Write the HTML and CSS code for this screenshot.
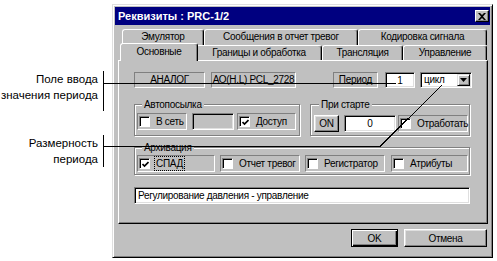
FILE: index.html
```html
<!DOCTYPE html>
<html lang="ru">
<head>
    <meta charset="UTF-8">
    <title>Реквизиты : PRC-1/2</title>
    <link rel="stylesheet" href="styles.css">
</head>
<body>
<div class="page">
    <div class="notes">
        <div class="note note-period">Поле ввода<br>значения периода</div>
        <div class="note note-unit">Размерность<br>периода</div>
    </div>

    <div class="dialog">
        <div class="titlebar">
            <span class="title">Реквизиты : PRC-1/2</span>
            <span class="close">
                <svg width="8" height="7" viewBox="0 0 8 7"><path d="M0 0h2l2 2 2-2h2L5 3.5 8 7H6L4 5 2 7H0l3-3.5z" fill="#000"/></svg>
            </span>
        </div>

        <div class="tabs">
            <div class="tab-row back">
                <div class="tab t-emu">Эмулятор</div>
                <div class="tab t-msg">Сообщения в отчет тревог</div>
                <div class="tab t-code">Кодировка сигнала</div>
            </div>
            <div class="tab-row front">
                <div class="tab t-main active">Основные</div>
                <div class="tab t-limits">Границы и обработка</div>
                <div class="tab t-trans">Трансляция</div>
                <div class="tab t-ctrl">Управление</div>
            </div>
        </div>

        <div class="panel">
            <div class="row-top">
                <div class="static s-type">АНАЛОГ</div>
                <div class="static s-addr">АО(Н.L) PCL_2728</div>
                <div class="static s-period">Период</div>
                <div class="edit e-period">1</div>
                <div class="edit combo">
                    <span class="combo-text">цикл</span>
                    <span class="combo-btn"><svg width="7" height="4" viewBox="0 0 7 4"><path d="M0 0h7L3.5 4z" fill="#000"/></svg></span>
                </div>
            </div>

            <div class="row-groups">
                <div class="group g-auto">
                    <div class="group-label">Автопосылка</div>
                    <div class="group-row">
                        <div class="check-cell c-net"><span class="check"></span>В сеть</div>
                        <div class="edit e-disabled"></div>
                        <div class="check-cell c-access"><span class="check on"><svg width="7" height="7" viewBox="0 0 7 7"><path d="M0.5 3l2 2 4-4" stroke="#000" stroke-width="1.7" fill="none"/></svg></span>Доступ</div>
                    </div>
                </div>
                <div class="group g-start">
                    <div class="group-label">При старте</div>
                    <div class="group-row start-row">
                        <div class="btn b-on">ON</div>
                        <div class="edit e-start">0</div>
                        <div class="check-cell c-run"><span class="check"></span>Отработать</div>
                    </div>
                </div>
            </div>

            <div class="group g-archive">
                <div class="group-label">Архивация</div>
                <div class="group-row">
                    <div class="check-cell c-fall"><span class="check on"><svg width="7" height="7" viewBox="0 0 7 7"><path d="M0.5 3l2 2 4-4" stroke="#000" stroke-width="1.7" fill="none"/></svg></span><span class="focus">СПАД</span></div>
                    <div class="check-cell c-report"><span class="check"></span>Отчет тревог</div>
                    <div class="check-cell c-rec"><span class="check"></span>Регистратор</div>
                    <div class="check-cell c-attr"><span class="check"></span>Атрибуты</div>
                </div>
            </div>

            <div class="edit e-desc">Регулирование давления - управление</div>
        </div>

        <div class="buttons">
            <div class="btn default b-ok">OK</div>
            <div class="btn b-cancel">Отмена</div>
        </div>
    </div>

    <!-- callout lines drawn over the dialog -->
    <svg class="callouts" width="497" height="261" viewBox="0 0 497 261">
        <path d="M103 83.5H396" stroke="#000" stroke-width="1" fill="none" shape-rendering="crispEdges"/>
        <path d="M103 146.5H380L442 85" stroke="#000" stroke-width="1" fill="none" shape-rendering="crispEdges"/>
    </svg>
</div>
</body>
</html>
```

FILE: styles.css
```css
body {
    margin: 0;
    background: #fff;
    font-family: 'Liberation Sans', Arial, sans-serif;
    font-size: 10px;
    letter-spacing: -0.3px;
    color: #000;
}
.page {
    position: relative;
    width: 497px;
    height: 261px;
    overflow: hidden;
    display: flex;
}
.notes {
    width: 104px;
    flex: none;
    font-size: 11.5px;
    letter-spacing: 0;
    line-height: 16px;
}
.note {
    border-right: 1px solid #000;
    padding-right: 5px;
    text-align: right;
    white-space: nowrap;
}
.note-period {
    margin-top: 71px;
    height: 40px;
}
.note-unit {
    margin-top: 24px;
    height: 32px;
}
.callouts {
    position: absolute;
    left: 0;
    top: 0;
    pointer-events: none;
}

/* window frame */
.dialog {
    width: 381px;
    height: 254px;
    margin: 4px 0 0 8px;
    box-sizing: border-box;
    background: #c0c0c0;
    border: 1px solid;
    border-color: #dfdfdf #000 #000 #dfdfdf;
    box-shadow: inset 1px 1px #fff, inset -1px -1px #808080;
    padding: 2px;
}
.titlebar {
    height: 18px;
    background: #000080;
    color: #fff;
    display: flex;
    align-items: center;
    justify-content: space-between;
    padding: 0 1px 0 3px;
    font-size: 11px;
    letter-spacing: 0;
    font-weight: bold;
}
.close {
    width: 14px;
    height: 12px;
    box-sizing: border-box;
    background: #c0c0c0;
    border: 1px solid;
    border-color: #fff #000 #000 #fff;
    box-shadow: inset -1px -1px #808080;
    display: flex;
    align-items: center;
    justify-content: center;
}

/* tabs */
.tabs {
    margin-top: 4px;
}
.tab-row {
    display: flex;
    padding-left: 7px;
}
.tab-row.back {
    height: 16px;
}
.tab-row.front {
    height: 15px;
}
.tab {
    flex: none;
    box-sizing: border-box;
    border: 1px solid;
    border-bottom: none;
    border-color: #fff #000 transparent #fff;
    border-radius: 3px 3px 0 0;
    box-shadow: inset -1px 0 #808080;
    text-align: center;
    line-height: 14px;
    white-space: nowrap;
}
.t-emu { width: 82px; }
.t-msg { width: 154px; }
.t-code { width: 129px; }
.t-main { width: 74px; }
.t-limits { width: 126px; }
.t-trans { width: 81px; }
.t-ctrl { width: 84px; }
.tab.active {
    position: relative;
    z-index: 1;
    width: 78px;
    height: 18px;
    margin: -2px -2px 0 -2px;
    background: #c0c0c0;
    line-height: 16px;
}

/* page of the tab control */
.panel {
    height: 164px;
    margin: 0 2px 0 3px;
    box-sizing: border-box;
    border: 1px solid;
    border-color: #fff #000 #000 #fff;
    box-shadow: inset -1px -1px #808080;
    padding: 11px 17px 0 15px;
}
.row-top {
    display: flex;
    height: 16px;
}
.row-top > div {
    flex: none;
}
.static {
    box-sizing: border-box;
    border: 1px solid;
    border-color: #808080 #fff #fff #808080;
    text-align: center;
    line-height: 14px;
    white-space: nowrap;
}
.s-type { width: 71px; margin-right: 6px; }
.s-addr { width: 85px; margin-right: 37px; }
.s-period { width: 45px; margin-right: 7px; }

.edit {
    box-sizing: border-box;
    background: #fff;
    border: 1px solid;
    border-color: #808080 #fff #fff #808080;
    box-shadow: inset 1px 1px #000, inset -1px -1px #dfdfdf;
    line-height: 15px;
    white-space: nowrap;
}
.e-period {
    width: 30px;
    margin-right: 5px;
    text-align: center;
}
.combo {
    width: 52px;
    display: flex;
    align-items: center;
    justify-content: space-between;
    padding: 2px 1px 2px 3px;
}
.combo-text {
    line-height: 12px;
}
.combo-btn {
    width: 13px;
    height: 12px;
    box-sizing: border-box;
    background: #c0c0c0;
    border: 1px solid;
    border-color: #dfdfdf #000 #000 #dfdfdf;
    box-shadow: inset 1px 1px #fff, inset -1px -1px #808080;
    display: flex;
    align-items: center;
    justify-content: center;
}

/* group boxes */
.row-groups {
    display: flex;
    gap: 10px;
    margin-top: 16px;
}
.group {
    box-sizing: border-box;
    border: 1px solid #808080;
    box-shadow: inset 1px 1px #fff, 1px 1px #fff;
    padding: 0 1px 3px 2px;
}
.group-label {
    width: max-content;
    margin: -7px 0 0 5px;
    padding: 0 2px;
    background: #c0c0c0;
    line-height: 13px;
}
.group-row {
    display: flex;
    height: 17px;
    margin-top: 2px;
}
.group-row > div {
    flex: none;
}
.g-auto { width: 166px; height: 32px; }
.g-start { width: 160px; height: 32px; padding-left: 3px; }
.start-row { margin-top: 4px; }
.g-archive {
    margin-top: 11px;
    height: 28px;
}
.g-archive .group-row {
    margin-top: 1px;
}

.check-cell {
    box-sizing: border-box;
    border: 1px solid;
    border-color: #808080 #fff #fff #808080;
    display: flex;
    align-items: center;
    padding-left: 1px;
    gap: 6px;
    white-space: nowrap;
}
.check {
    flex: none;
    width: 11px;
    height: 11px;
    box-sizing: border-box;
    background: #fff;
    border: 1px solid;
    border-color: #808080 #fff #fff #808080;
    box-shadow: inset 1px 1px #000;
    display: flex;
    align-items: center;
    justify-content: center;
    padding: 1px 0 0 1px;
}
.focus {
    outline: 1px dotted #000;
    outline-offset: 1px;
    line-height: 11px;
}
.c-net { width: 50px; margin-right: 5px; }
.e-disabled {
    width: 42px;
    margin-right: 3px;
    background: #c0c0c0;
}
.c-access { width: 59px; }
.b-on {
    width: 25px;
    margin-right: 5px;
}
.e-start {
    width: 52px;
    margin-right: 2px;
    text-align: center;
}
.c-run { width: 70px; }
.c-fall { width: 78px; margin-right: 5px; }
.c-report { width: 80px; margin-right: 5px; }
.c-rec { width: 80px; margin-right: 6px; }
.c-attr { width: 77px; }

.e-desc {
    margin-top: 12px;
    height: 17px;
    padding-left: 3px;
}

/* push buttons */
.btn {
    box-sizing: border-box;
    background: #c0c0c0;
    border: 1px solid;
    border-color: #fff #000 #000 #fff;
    box-shadow: inset -1px -1px #808080, inset 1px 1px #dfdfdf;
    display: flex;
    align-items: center;
    justify-content: center;
}
.btn.default {
    border-color: #000;
    box-shadow: inset 1px 1px #fff, inset -1px -1px #000, inset -2px -2px #808080;
}
.buttons {
    display: flex;
    justify-content: flex-end;
    gap: 6px;
    margin-top: 5px;
    padding-right: 3px;
}
.buttons .btn {
    height: 18px;
}
.b-ok { width: 47px; }
.b-cancel { width: 83px; }
```
